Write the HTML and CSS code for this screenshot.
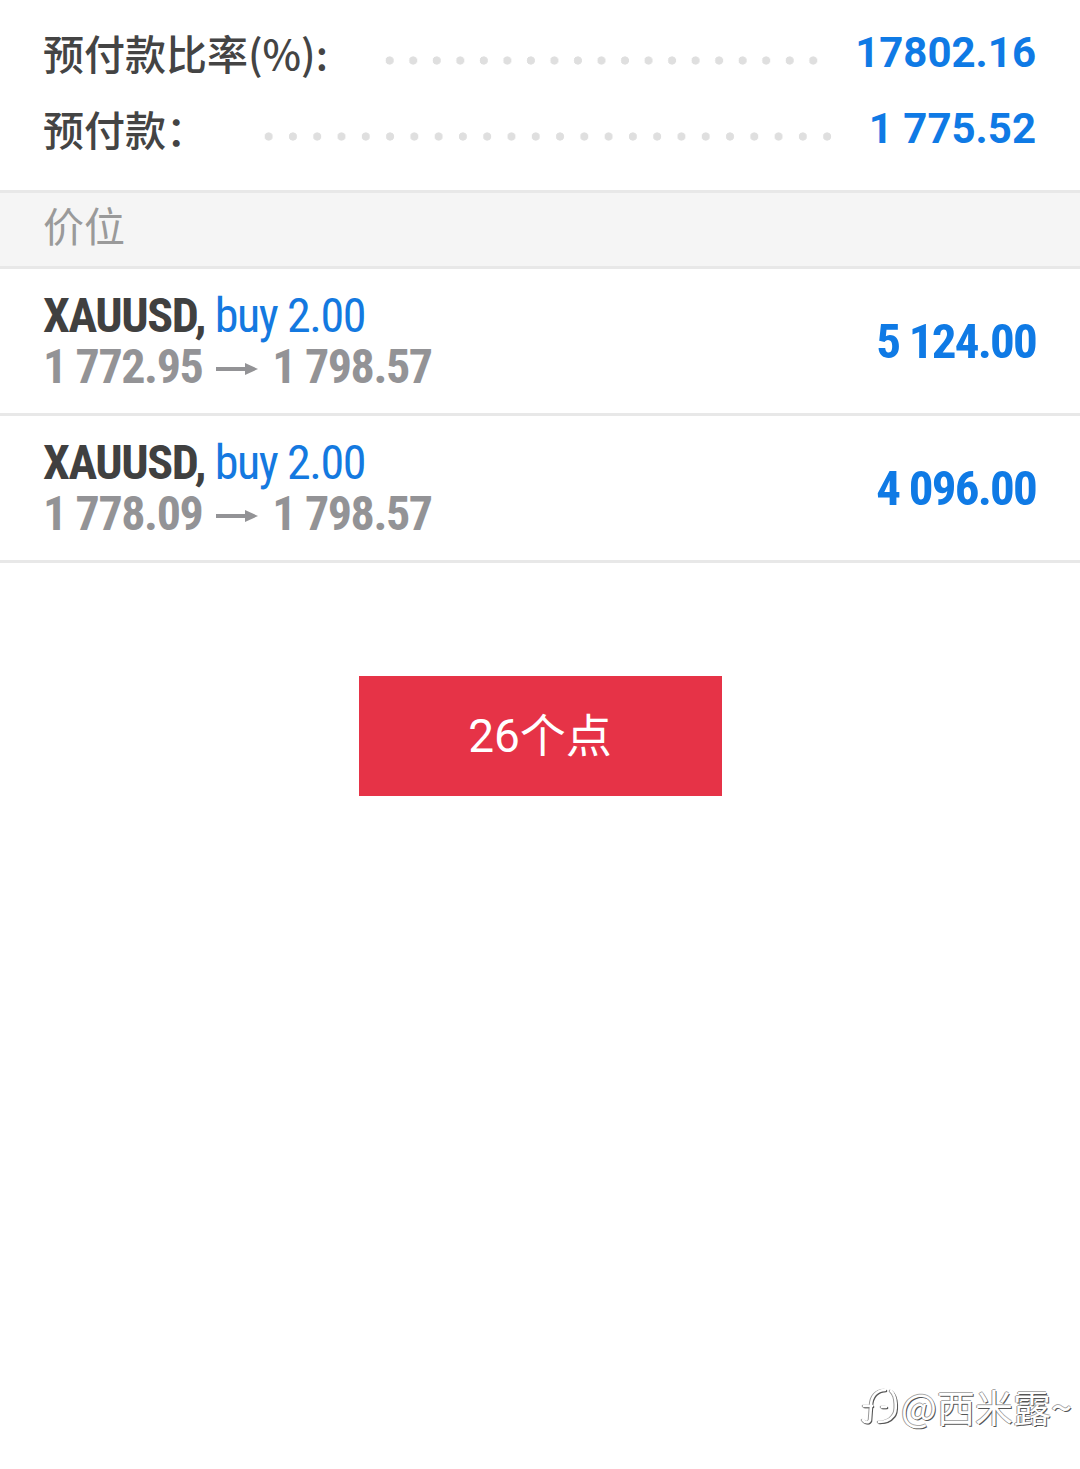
FILE: index.html
```html
<!DOCTYPE html>
<html lang="zh">
<head>
<meta charset="utf-8">
<link rel="stylesheet" href="styles.css">
</head>
<body>
<div class="screen">
  <div class="summary">
    <div class="sum-row">
      <span class="label">预付款比率(%):</span>
      <span class="dots"></span>
      <span class="value">17802.16</span>
    </div>
    <div class="sum-row">
      <span class="label">预付款：</span>
      <span class="dots"></span>
      <span class="value">1 775.52</span>
    </div>
  </div>
  <div class="section-head">价位</div>
  <div class="pos">
    <div class="pos-info">
      <div class="pos-title"><span class="sym">XAUUSD,</span> <span class="side">buy 2.00</span></div>
      <div class="pos-prices"><span>1 772.95</span><svg class="arrow" width="42" height="14" viewBox="0 0 42 14"><path d="M0 7 H32" stroke="#939396" stroke-width="4"/><path d="M29 1 L42 7 L29 13 Z" fill="#939396"/></svg><span>1 798.57</span></div>
    </div>
    <div class="pos-profit">5 124.00</div>
  </div>
  <div class="pos">
    <div class="pos-info">
      <div class="pos-title"><span class="sym">XAUUSD,</span> <span class="side">buy 2.00</span></div>
      <div class="pos-prices"><span>1 778.09</span><svg class="arrow" width="42" height="14" viewBox="0 0 42 14"><path d="M0 7 H32" stroke="#939396" stroke-width="4"/><path d="M29 1 L42 7 L29 13 Z" fill="#939396"/></svg><span>1 798.57</span></div>
    </div>
    <div class="pos-profit">4 096.00</div>
  </div>
  <div class="btn-wrap">
    <div class="btn">26个点</div>
  </div>
  <div class="watermark">
    <svg class="wm-logo" width="40" height="40" viewBox="4 4 40 40">
      <path d="M30 8 C22 8 16 14 16 24 L15 38 C14 41 10 41 8 38" fill="none" stroke="#fff" stroke-width="2.6" stroke-linecap="round"/>
      <path d="M9 24 L17 24" fill="none" stroke="#fff" stroke-width="2.6" stroke-linecap="round"/>
      <path d="M36 9 C42 14 42 30 38 34 C35 38 30 40 24 40" fill="none" stroke="#fff" stroke-width="2.6" stroke-linecap="round"/>
      <path d="M27 25 L31 25" fill="none" stroke="#fff" stroke-width="2.6" stroke-linecap="round"/>
    </svg>
    <span class="wm-text">@西米露~</span>
  </div>
</div>
</body>
</html>
```
FILE: styles.css
```css
* { box-sizing: border-box; }
html, body { margin: 0; padding: 0; background: #fff; }
body {
  font-family: "Roboto", "Noto Sans CJK SC", sans-serif;
  width: 1080px;
  height: 1469px;
  overflow: hidden;
}
.screen { position: relative; width: 1080px; height: 1469px; }

.summary {
  padding: 14px 44px 24px 43px;
  border-bottom: 3px solid #e8e8e8;
}
.sum-row {
  display: flex;
  align-items: center;
  height: 76px;
}
.label {
  font-family: "Noto Sans CJK SC", sans-serif;
  font-size: 41px;
  font-weight: 500;
  color: #444;
  white-space: nowrap;
}
.dots {
  flex: 1;
  height: 9px;
  margin: 16px 30px 0 50px;
  background-image: radial-gradient(circle, #dfdfdf 3.8px, transparent 4.4px);
  background-size: 23.3px 9px;
  background-repeat: space no-repeat;
}
.value {
  font-family: "Roboto", sans-serif;
  font-weight: 700;
  font-size: 42px;
  color: #0f7ae5;
  white-space: nowrap;
}

.section-head {
  height: 76px;
  background: #f5f5f5;
  border-bottom: 3px solid #e8e8e8;
  padding: 0 0 12px 43px;
  display: flex;
  align-items: center;
  font-family: "Noto Sans CJK SC", sans-serif;
  font-size: 41px;
  color: #9a9a9a;
}

.pos {
  height: 147px;
  border-bottom: 3px solid #e8e8e8;
  display: flex;
  align-items: center;
  justify-content: space-between;
  padding: 0 44px 0 43px;
}
.pos-info {
  font-family: "Roboto Condensed", "Liberation Sans Narrow", "Roboto", sans-serif;
  font-stretch: condensed;
  letter-spacing: -1.4px;
}
.pos-title, .pos-prices {
  font-size: 48px;
  line-height: 51px;
  white-space: nowrap;
}
.pos-prices {
  display: flex;
  align-items: center;
  gap: 14px;
}
.arrow { flex: none; margin-top: 4px; }
.sym { font-weight: 700; color: #404040; }
.side { font-weight: 400; color: #1479e0; }
.pos-prices { font-weight: 700; color: #939396; }
.pos-profit {
  font-family: "Roboto Condensed", "Liberation Sans Narrow", "Roboto", sans-serif;
  font-stretch: condensed;
  letter-spacing: -1.8px;
  font-weight: 700;
  font-size: 49px;
  color: #0f7ae5;
}

.btn-wrap {
  display: flex;
  justify-content: center;
  padding-top: 113px;
}
.btn {
  width: 363px;
  height: 120px;
  background: #e63347;
  color: #fff;
  display: flex;
  align-items: center;
  justify-content: center;
  padding-bottom: 8px;
  font-family: "Roboto", "Noto Sans CJK SC", sans-serif;
  font-size: 46px;
}

.watermark {
  position: absolute;
  right: 8px;
  top: 1378px;
  display: flex;
  align-items: center;
  gap: 2px;
}
.wm-logo {
  filter: drop-shadow(1px 1px 0 #555) drop-shadow(-1px 0 0 #999);
}
.wm-text {
  font-family: "Noto Sans CJK SC", sans-serif;
  font-size: 38px;
  color: #fff;
  text-shadow: 1px 1px 0 #555, -1px 0 0 #999, 0 -1px 0 #aaa;
}
```
